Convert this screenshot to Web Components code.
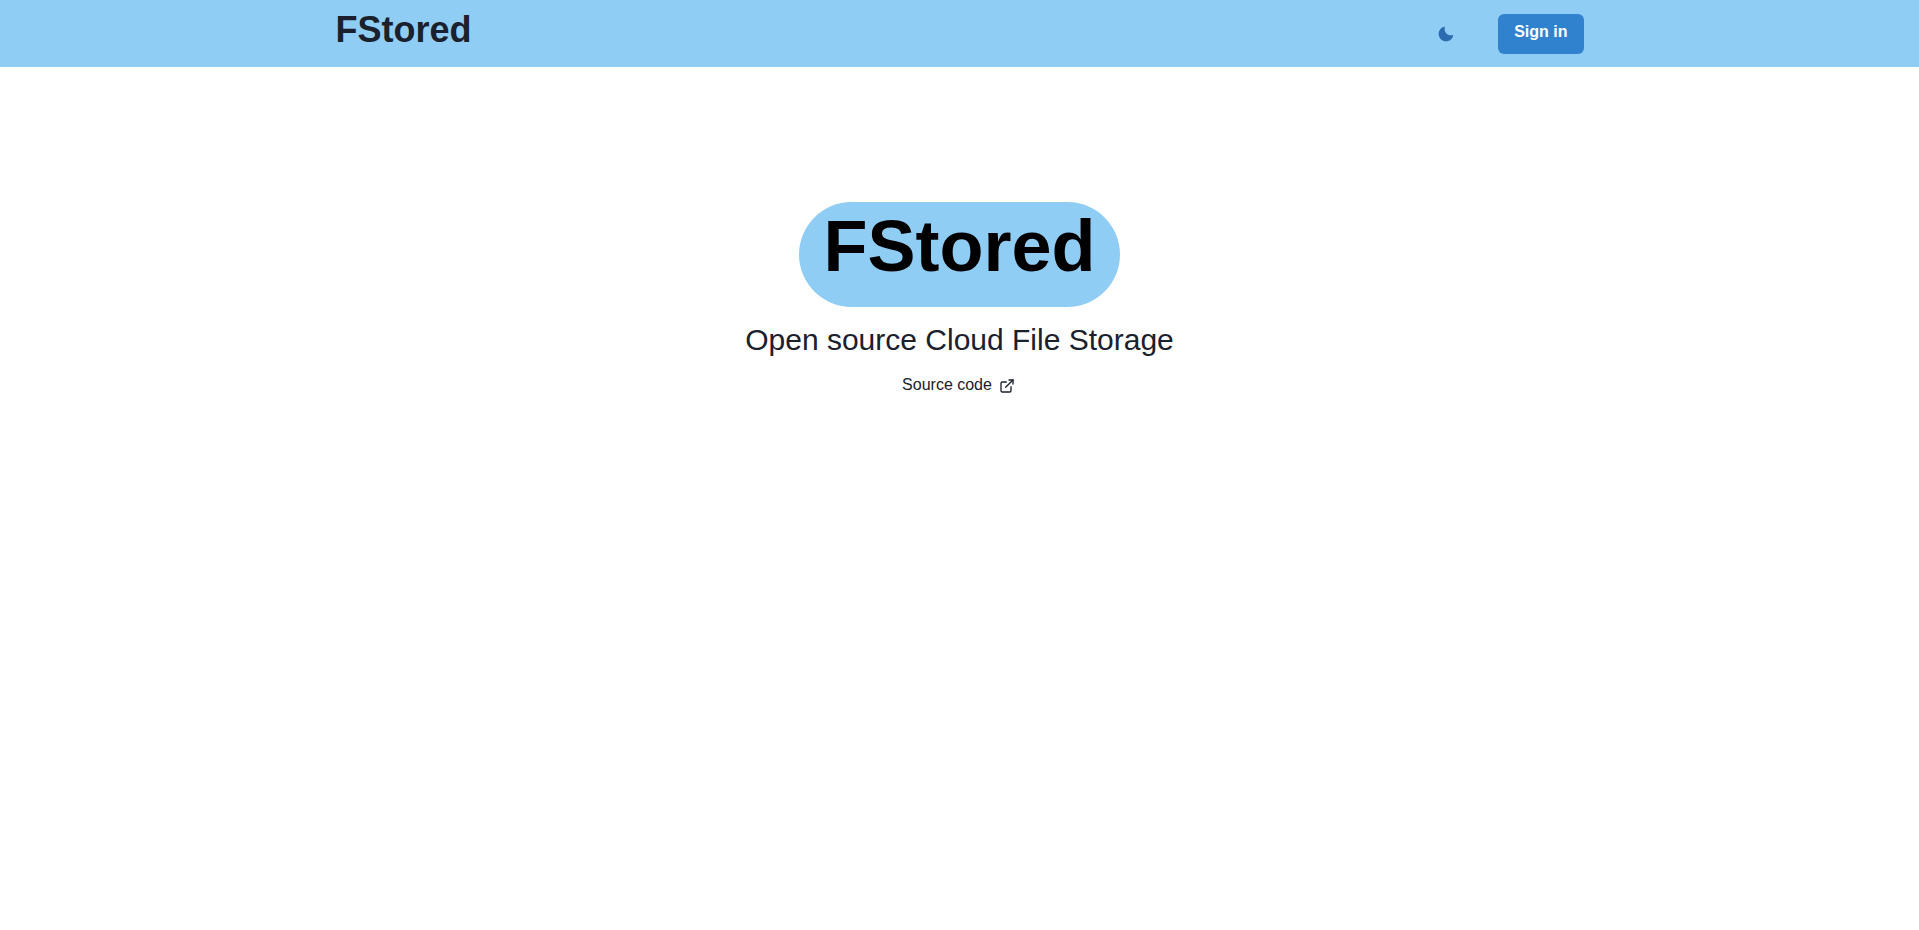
<!DOCTYPE html>
<html lang="en">
<head>
<meta charset="utf-8">
<meta name="viewport" content="width=device-width, initial-scale=1">
<title>FStored</title>
<style>
  :root {
    --sky: #90cdf4;
    --blue: #3182ce;
    --blue-deep: #2b6cb0;
    --ink: #1a202c;
  }
  body {
    margin: 0;
    background: #fff;
    color: var(--ink);
    font: 16px/24px "Liberation Sans", Arial, sans-serif;
  }
</style>
</head>
<body>
<fs-app></fs-app>
<script>
  const define = (name, html) => {
    const template = document.createElement('template');
    template.innerHTML = html;
    customElements.define(name, class extends HTMLElement {
      constructor() {
        super();
        this.attachShadow({ mode: 'open' }).append(template.content.cloneNode(true));
      }
    });
  };

  define('fs-icon-button', `
    <style>
      :host { display: block; }
      button {
        display: flex; align-items: center; justify-content: center;
        width: 40px; height: 40px; padding: 0; border: 0; border-radius: 6px;
        background: transparent; color: var(--blue-deep); cursor: pointer;
      }
      svg { width: 16px; height: 16px; }
    </style>
    <button type="button" aria-label="Toggle color mode">
      <svg viewBox="0 0 24 24" aria-hidden="true"><path fill="currentColor" d="M21.4,13.7C20.6,13.9,19.8,14,19,14c-5,0-9-4-9-9c0-0.8,0.1-1.6,0.3-2.4c0.1-0.3,0-0.7-0.3-1c-0.3-0.3-0.6-0.4-1-0.3C4.3,2.7,1,7.1,1,12c0,6.1,4.9,11,11,11c4.9,0,9.3-3.3,10.6-8.1c0.1-0.3,0-0.7-0.3-1C22.1,13.7,21.7,13.6,21.4,13.7z"/></svg>
    </button>`);

  define('fs-button', `
    <style>
      :host { display: block; }
      button {
        box-sizing: border-box; display: flex; align-items: center; justify-content: center;
        height: 40px; padding: 0 16px 4px; border: 0; border-radius: 6px;
        background: var(--blue); color: #fff; font: inherit; font-weight: 600; cursor: pointer;
      }
    </style>
    <button type="button"><slot></slot></button>`);

  define('fs-header', `
    <style>
      :host { display: block; background: var(--sky); }
      header {
        box-sizing: border-box; max-width: 1280px; margin: 0 auto; padding: 8px 16px;
        display: flex; align-items: center; justify-content: space-between;
      }
      h2 { margin: 0; padding-bottom: 8px; font-size: 36px; line-height: 1.2; }
      nav { display: flex; align-items: center; gap: 32px; }
    </style>
    <header>
      <h2><slot></slot></h2>
      <nav>
        <fs-icon-button></fs-icon-button>
        <fs-button>Sign in</fs-button>
      </nav>
    </header>`);

  define('fs-external-link', `
    <style>
      :host { display: block; }
      a { display: flex; align-items: center; gap: 7px; color: inherit; text-decoration: none; }
      svg { width: 16px; height: 16px; margin: 2px 2px 0 0; }
    </style>
    <a href="#source">
      <slot></slot>
      <svg viewBox="0 0 24 24" aria-hidden="true" fill="none" stroke="currentColor" stroke-width="2" stroke-linecap="round"><path d="M18 13v6a2 2 0 0 1-2 2H5a2 2 0 0 1-2-2V8a2 2 0 0 1 2-2h6"/><path d="M15 3h6v6"/><path d="M10 14L21 3"/></svg>
    </a>`);

  define('fs-hero', `
    <style>
      :host { display: flex; flex-direction: column; align-items: center; padding: 135px 16px 0; }
      h1 {
        margin: 0; padding: 0 24px 17px; border-radius: 9999px;
        background: var(--sky); color: #000; font-size: 72px; line-height: 88px;
      }
      p { margin: 11px 0; font-size: 30px; line-height: 44px; }
    </style>
    <h1><slot name="title"></slot></h1>
    <p><slot name="tagline"></slot></p>
    <slot></slot>`);

  define('fs-app', `
    <style>:host { display: block; }</style>
    <fs-header>FStored</fs-header>
    <main>
      <fs-hero>
        <span slot="title">FStored</span>
        <span slot="tagline">Open source Cloud File Storage</span>
        <fs-external-link>Source code</fs-external-link>
      </fs-hero>
    </main>`);
</script>
</body>
</html>
